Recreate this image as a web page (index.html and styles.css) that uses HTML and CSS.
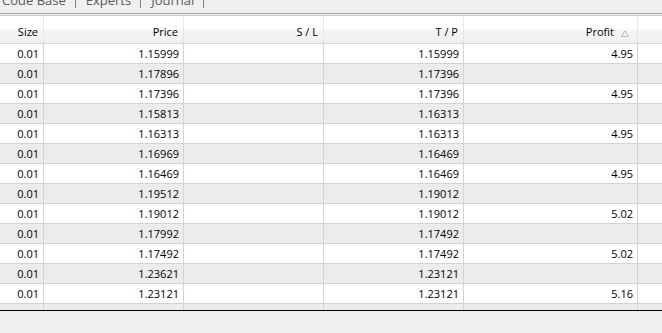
FILE: index.html
```html
<!DOCTYPE html>
<html>
<head>
<meta charset="utf-8">
<link rel="stylesheet" href="styles.css">
</head>
<body>
<div class="tabs">
  <span class="tab first">Code Base</span>
  <span class="tab">Experts</span>
  <span class="tab">Journal</span>
</div>
<div class="rules"></div>
<div class="panel">
  <div class="grid head">
    <div class="c">Size</div>
    <div class="c">Price</div>
    <div class="c">S / L</div>
    <div class="c">T / P</div>
    <div class="c sort">Profit<svg class="tri" width="8" height="7" viewBox="0 0 8 7"><path d="M0.5 6.5 L4 0.8 L7.5 6.5 Z" fill="none" stroke="#b8b8b8" stroke-width="1"/></svg></div>
    <div class="c last"></div>
  </div>
  <div class="grid row"><div class="c">0.01</div><div class="c">1.15999</div><div class="c"></div><div class="c">1.15999</div><div class="c">4.95</div><div class="c last"></div></div>
  <div class="grid row alt"><div class="c">0.01</div><div class="c">1.17896</div><div class="c"></div><div class="c">1.17396</div><div class="c"></div><div class="c last"></div></div>
  <div class="grid row"><div class="c">0.01</div><div class="c">1.17396</div><div class="c"></div><div class="c">1.17396</div><div class="c">4.95</div><div class="c last"></div></div>
  <div class="grid row alt"><div class="c">0.01</div><div class="c">1.15813</div><div class="c"></div><div class="c">1.16313</div><div class="c"></div><div class="c last"></div></div>
  <div class="grid row"><div class="c">0.01</div><div class="c">1.16313</div><div class="c"></div><div class="c">1.16313</div><div class="c">4.95</div><div class="c last"></div></div>
  <div class="grid row alt"><div class="c">0.01</div><div class="c">1.16969</div><div class="c"></div><div class="c">1.16469</div><div class="c"></div><div class="c last"></div></div>
  <div class="grid row"><div class="c">0.01</div><div class="c">1.16469</div><div class="c"></div><div class="c">1.16469</div><div class="c">4.95</div><div class="c last"></div></div>
  <div class="grid row alt"><div class="c">0.01</div><div class="c">1.19512</div><div class="c"></div><div class="c">1.19012</div><div class="c"></div><div class="c last"></div></div>
  <div class="grid row"><div class="c">0.01</div><div class="c">1.19012</div><div class="c"></div><div class="c">1.19012</div><div class="c">5.02</div><div class="c last"></div></div>
  <div class="grid row alt"><div class="c">0.01</div><div class="c">1.17992</div><div class="c"></div><div class="c">1.17492</div><div class="c"></div><div class="c last"></div></div>
  <div class="grid row"><div class="c">0.01</div><div class="c">1.17492</div><div class="c"></div><div class="c">1.17492</div><div class="c">5.02</div><div class="c last"></div></div>
  <div class="grid row alt"><div class="c">0.01</div><div class="c">1.23621</div><div class="c"></div><div class="c">1.23121</div><div class="c"></div><div class="c last"></div></div>
  <div class="grid row"><div class="c">0.01</div><div class="c">1.23121</div><div class="c"></div><div class="c">1.23121</div><div class="c">5.16</div><div class="c last"></div></div>
  <div class="grid row alt"><div class="c">0.01</div><div class="c">1.22855</div><div class="c"></div><div class="c">1.22355</div><div class="c"></div><div class="c last"></div></div>
</div>
<div class="status"></div>
</body>
</html>
```

FILE: styles.css
```css
html, body {
  margin: 0;
  padding: 0;
  background: #f0f0f0;
  font-family: "Open Sans", "Liberation Sans", sans-serif;
  font-size: 11px;
  color: #000;
}

.tabs {
  height: 13px;
  overflow: hidden;
  display: flex;
  align-items: flex-start;
  background: #f0f0f0;
}

.tab {
  display: block;
  font-size: 13px;
  line-height: 12px;
  color: #5a5a5a;
  padding: 0 9px 0 10px;
  height: 8px;
  border-right: 1px solid #828282;
}
.tab.first { padding-left: 2px; }

.tab::before {
  content: "";
  display: block;
  margin-top: -6px;
}

.rules {
  height: 1px;
  border-top: 1px solid #a0a0a0;
  border-bottom: 1px solid #c8c8c8;
  background: #f4f4f4;
}

.panel {
  height: 294px;
  overflow: hidden;
  background: #fff;
  padding-top: 1px;
  box-sizing: border-box;
}

.grid {
  display: grid;
  grid-template-columns: 44px 140px 140px 140px 174px 1fr;
}

.c {
  box-sizing: border-box;
  text-align: right;
  padding-right: 4px;
  white-space: nowrap;
  overflow: hidden;
}

.head {
  height: 27px;
  border-bottom: 1px solid #d5d5d5;
  box-sizing: border-box;
  background: linear-gradient(#ffffff 0%, #ffffff 45%, #f3f4f6 55%, #eff0f2 100%);
}
.head .c {
  border-right: 1px solid #e4e5e7;
  padding-top: 7px;
  line-height: 16px;
  padding-right: 5px;
}
.head .sort {
  padding-right: 8px;
  display: flex;
  justify-content: flex-end;
  align-items: flex-start;
}
.tri {
  margin: 6px 0 0 7px;
  display: block;
}

.row {
  height: 20px;
  border-bottom: 1px solid #d3d3d3;
  box-sizing: border-box;
  background: #fff;
}
.row.alt { background: #ececec; }
.row .c {
  line-height: 19px;
  border-right: 1px solid #d3d3d3;
}
.c.last { border-right: 0 !important; }

.status {
  height: 23px;
  border-top: 1px solid #000;
  background: #f0f0f0;
}
```
